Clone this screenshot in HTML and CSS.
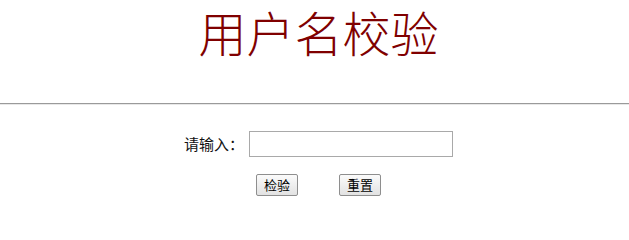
FILE: index.html
```html
<!DOCTYPE html>
<html lang="zh-CN">
<head>
<meta charset="utf-8">
<title>用户名校验</title>
<link rel="stylesheet" href="styles.css">
</head>
<body>
<div class="page">
  <header class="header">
    <h1 class="title">用户名校验</h1>
  </header>
  <hr class="divider">
  <form class="form">
    <div class="row">
      <label class="label" for="username">请输入：</label>
      <input class="field" id="username" type="text">
    </div>
    <div class="actions">
      <button class="btn" type="button">检验</button>
      <button class="btn" type="reset">重置</button>
    </div>
  </form>
</div>
</body>
</html>
```

FILE: styles.css
```css
html, body {
  margin: 0;
  padding: 0;
  background: #ffffff;
}

.page {
  width: 629px;
  font-family: "Noto Sans CJK SC", "Noto Sans", sans-serif;
  color: #000;
}

.header {
  height: 103px;
  padding-left: 8px;
  box-sizing: border-box;
}

.title {
  margin: 0;
  padding: 0;
  text-align: center;
  font-size: 48px;
  line-height: 62px;
  font-weight: 300;
  color: #800000;
}

.divider {
  margin: 0;
  height: 0;
  border: 0;
  border-top: 1px solid #9a9a9a;
  border-bottom: 1px solid #e8e8e8;
}

.form {
  padding-left: 8px;
  display: flex;
  flex-direction: column;
  align-items: center;
}

.row {
  margin-top: 26px;
  display: flex;
  align-items: center;
  gap: 5px;
}

.label {
  width: 60px;
  font-size: 15px;
  line-height: 26px;
  color: #111;
}

.field {
  width: 204px;
  height: 26px;
  box-sizing: border-box;
  margin: 0;
  border: 1px solid #a9a9a9;
  background: #fff;
  padding: 0 3px;
}

.actions {
  margin-top: 17px;
  display: flex;
  gap: 41px;
}

.btn {
  width: 42px;
  height: 22px;
  box-sizing: border-box;
  margin: 0;
  padding: 0;
  border: 1px solid #8e8e8e;
  border-radius: 2px;
  background: linear-gradient(#fbfbfb, #e2e2e2);
  font-family: "Noto Sans CJK SC", sans-serif;
  font-size: 13px;
  line-height: 20px;
  color: #000;
}
```
